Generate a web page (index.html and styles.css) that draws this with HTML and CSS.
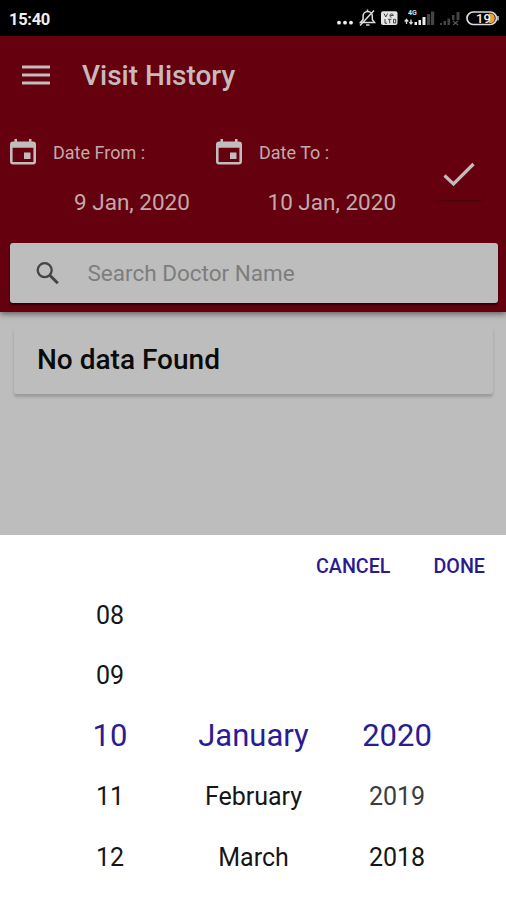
FILE: index.html
```html
<!DOCTYPE html>
<html lang="en">
<head>
<meta charset="utf-8">
<title>Visit History</title>
<link rel="stylesheet" href="styles.css">
</head>
<body>
<div class="status">
  <span class="clock">15:40</span>
  <svg class="status-icons" width="170" height="36" viewBox="0 0 170 36">
    <g fill="#eee"><circle cx="3" cy="22.700" r="1.900"/><circle cx="9" cy="22.700" r="1.900"/><circle cx="15" cy="22.700" r="1.900"/></g>
    <g fill="none" stroke="#ddd" stroke-width="1.500"><path d="M24.500 22.500h14l-2.200-3v-3.500a4.600 4.600 0 0 0-9.200 0v3.500zM30 25h3.500M31.500 11V9.500M24 25.500L38 10.500"/></g>
    <rect x="45" y="11.300" width="16.500" height="13.700" rx="2" fill="#e4e4e4"/>
    <path d="M48 13.500l1.800 3.500 1.800-3.500M55.500 17.300a1.700 1.700 0 1 1 1.800-1.800h-3M49 19v4.200h2M52 19.300h3.400M53.700 19.300v4M57.500 19.300v3.700h2.200v-3.700z" fill="none" stroke="#444" stroke-width="1"/>
    <text class="network" x="72" y="14.500">4G</text>
    <path d="M70.500 24v-4.500m-1.800 2l1.800-2 1.800 2M75 19.500v4.500m-1.500-2l1.500 2 1.500-2" fill="none" stroke="#ddd" stroke-width="1.300"/>
    <path d="M78.500 22h2.500V25h-2.500zM82.500 20h2.500v5h-2.500zM86.500 17h3v8h-3z" fill="#eee"/>
    <path d="M91 14h3.200v11H91zM95 11.500h3.200V25H95z" fill="#444"/>
    <path d="M104 23h2v2h-2zM107.500 21h2.500v4h-2.500zM111.500 18.500h2.500V25h-2.500zM116 15h2.500v5H116zM120.500 12h3v8h-3z" fill="#444"/>
    <path d="M117 21l5 4m0-4l-5 4" stroke="#555" stroke-width="1.300"/>
    <rect x="131" y="12" width="29.500" height="12.500" rx="6.200" fill="none" stroke="#ddd" stroke-width="1.700"/>
    <path d="M153 13.500h1.500c3 0 4.300 2.300 4.300 4.700s-1.300 4.800-4.300 4.800H153z" fill="#e9a13b"/>
    <path d="M162 16v4.500" stroke="#ccc" stroke-width="1.500"/>
    <text class="battery" x="140" y="22.800">19</text>
  </svg>
</div>

<header class="header">
  <div class="title-row">
    <svg class="menu" width="28" height="20" viewBox="0 0 28 20"><path d="M0 2h28M0 10h28M0 18h28" stroke="currentColor" stroke-width="3.200"/></svg>
    <h1 class="title">Visit History</h1>
  </div>
  <div class="dates">
    <div class="date">
      <div class="date-head">
        <svg class="cal" width="28" height="28" viewBox="0 0 28 28"><path fill="currentColor" fill-rule="evenodd" d="M5.500 1H8v2.500h12V1h2.500v2.500H24a3 3 0 0 1 3 3V23.500a3 3 0 0 1-3 3H4a3 3 0 0 1-3-3V6.500a3 3 0 0 1 3-3h1.500zM3.600 9.800V24h20.800V9.800zM15 14.500h6.500V21H15z"/></svg>
        <span class="label">Date From :</span>
      </div>
      <div class="value value-from">9 Jan, 2020</div>
    </div>
    <div class="date">
      <div class="date-head">
        <svg class="cal" width="28" height="28" viewBox="0 0 28 28"><path fill="currentColor" fill-rule="evenodd" d="M5.500 1H8v2.500h12V1h2.500v2.500H24a3 3 0 0 1 3 3V23.500a3 3 0 0 1-3 3H4a3 3 0 0 1-3-3V6.500a3 3 0 0 1 3-3h1.500zM3.600 9.800V24h20.800V9.800zM15 14.500h6.500V21H15z"/></svg>
        <span class="label">Date To :</span>
      </div>
      <div class="value value-to">10 Jan, 2020</div>
    </div>
    <div class="apply">
      <svg width="34" height="26" viewBox="0 0 34 26"><path d="M2.500 13.500l9 8.500L31.500 2" fill="none" stroke="currentColor" stroke-width="3.200"/></svg>
    </div>
  </div>
  <div class="search">
    <svg class="glass" width="24" height="24" viewBox="0 0 24 24" fill="none" stroke="#444"><circle cx="8.700" cy="9.200" r="7" stroke-width="2.300"/><path d="M13.800 14.300l8 8" stroke-width="3"/></svg>
    <span class="placeholder">Search Doctor Name</span>
  </div>
</header>

<main class="content">
  <div class="card"><span class="empty">No data Found</span></div>
</main>

<section class="sheet">
  <div class="actions"><span class="cancel">CANCEL</span><span class="done">DONE</span></div>
  <div class="picker">
    <div class="col"><span>08</span><span>09</span><span class="on">10</span><span>11</span><span>12</span></div>
    <div class="col months"><span class="on">January</span><span>February</span><span>March</span></div>
    <div class="col years"><span class="on">2020</span><span class="dim">2019</span><span>2018</span></div>
  </div>
</section>
</body>
</html>
```

FILE: styles.css
```css
* { box-sizing: border-box; }
body {
  margin: 0;
  width: 506px;
  height: 900px;
  overflow: hidden;
  display: flex;
  flex-direction: column;
  background: #bdbdbd;
  font-family: Roboto, "Liberation Sans", sans-serif;
  white-space: nowrap;
}
svg { display: block; flex: none; }
.status {
  height: 36px;
  flex: none;
  display: flex;
  align-items: center;
  justify-content: space-between;
  padding-left: 9px;
  background: #000;
  color: #f0f0f0;
}
.clock { font-size: 16.5px; font-weight: 700; letter-spacing: -.3px; padding-top: 2px; }
.network { font-size: 7px; font-weight: 700; fill: #ddd; }
.battery { font-size: 13px; font-weight: 500; fill: #eee; }
.header {
  height: 276px;
  flex: none;
  background: #65000f;
  color: #c3bcbc;
  box-shadow: 0 2px 6px rgba(0, 0, 0, .5);
  z-index: 1;
}
.title-row { height: 78px; display: flex; align-items: center; padding-left: 21.5px; }
.title { margin: 0 0 0 32.5px; padding-top: 1px; font-size: 28px; line-height: 37px; font-weight: 500; color: #c9b9bb; }
.dates { height: 129px; display: flex; padding-left: 9px; }
.date { width: 206px; padding-top: 24px; }
.date-head { height: 28px; display: flex; align-items: center; gap: 16px; }
.label { font-size: 18px; color: #c3a9ad; }
.value { margin-top: 20px; line-height: 32px; font-size: 22.5px; color: #c3a9ad; }
.value-from { padding-left: 65px; }
.value-to { padding-left: 52.5px; }
.apply {
  width: 50px;
  height: 50px;
  margin: 36px 0 0 13px;
  display: flex;
  align-items: center;
  justify-content: center;
  border-radius: 4px;
  box-shadow: 0 2px 2px -1px rgba(45, 0, 5, .6);
}
.search {
  height: 60px;
  margin: 0 8.5px 0 10px;
  display: flex;
  align-items: center;
  padding-left: 26px;
  border-radius: 3px;
  background: #bdbdbd;
  box-shadow: 0 2px 2px rgba(0, 0, 0, .6);
}
.placeholder { margin-left: 27.5px; font-size: 22.5px; color: #7d7d7d; }
.content { height: 223px; flex: none; padding: 14px 13px 0 14px; }
.card {
  height: 68px;
  padding-left: 23px;
  line-height: 68px;
  border-radius: 3px;
  background: #bdbdbd;
  box-shadow: 0 3px 3px rgba(0, 0, 0, .18);
}
.empty { font-size: 28px; font-weight: 500; color: #0b0b0b; }
.sheet { flex: 1; background: #fff; }
.actions {
  height: 49px;
  display: flex;
  justify-content: flex-end;
  padding-right: 21px;
  gap: 43px;
  line-height: 63px;
  font-size: 19.7px;
  font-weight: 500;
  color: #2a1a90;
}
.picker { display: flex; justify-content: center; gap: 1.5px; padding-left: 1px; }
.col { width: 142px; display: flex; flex-direction: column; font-size: 25px; color: #161616; text-align: center; }
.col span { height: 60.4px; line-height: 63px; }
.months, .years { padding-top: 120.8px; }
.col .on { font-size: 31px; line-height: 62px; color: #2a1c94; }
.col .dim { color: #3c3c3c; }
```
